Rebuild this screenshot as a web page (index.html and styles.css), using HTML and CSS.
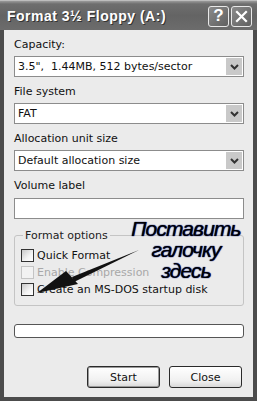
FILE: index.html
```html
<!DOCTYPE html>
<html>
<head>
<meta charset="utf-8">
<link rel="stylesheet" href="styles.css">
</head>
<body>
<div class="window">
  <div class="titlebar">
    <span class="title">Format 3½ Floppy (A:)</span>
    <div class="tbtns">
      <span class="tbtn help">?</span>
      <span class="tbtn close">
        <svg width="13" height="13" viewBox="0 0 13 13"><path d="M2 2 L11 11 M11 2 L2 11" stroke="#fff" stroke-width="2.2" stroke-linecap="square"/></svg>
      </span>
    </div>
  </div>
  <div class="body">
    <div class="label">Capacity:</div>
    <div class="select"><span class="val">3.5",&nbsp; 1.44MB, 512 bytes/sector</span><span class="drop"><svg width="9" height="6" viewBox="0 0 9 6"><path d="M1 1 L4.5 4.5 L8 1" fill="none" stroke="#333" stroke-width="2"/></svg></span></div>
    <div class="label">File system</div>
    <div class="select"><span class="val">FAT</span><span class="drop"><svg width="9" height="6" viewBox="0 0 9 6"><path d="M1 1 L4.5 4.5 L8 1" fill="none" stroke="#333" stroke-width="2"/></svg></span></div>
    <div class="label">Allocation unit size</div>
    <div class="select"><span class="val">Default allocation size</span><span class="drop"><svg width="9" height="6" viewBox="0 0 9 6"><path d="M1 1 L4.5 4.5 L8 1" fill="none" stroke="#333" stroke-width="2"/></svg></span></div>
    <div class="label">Volume label</div>
    <div class="input"></div>
    <fieldset class="group">
      <legend>Format options</legend>
      <div class="check"><span class="box"></span>Quick Format</div>
      <div class="check disabled"><span class="box"></span>Enable Compression</div>
      <div class="check"><span class="box"></span>Create an MS-DOS startup disk</div>
    </fieldset>
    <div class="progress"></div>
    <div class="buttons">
      <span class="btn default">Start</span>
      <span class="btn">Close</span>
    </div>
  </div>
  <svg class="arrow" width="257" height="401" viewBox="0 0 257 401">
    <path d="M139 250 L72 277 L74 282 Z" fill="#111"/>
    <path d="M37 293 L66 271 L78 284 Z" fill="#111"/>
  </svg>
  <div class="note">
    <div class="nl">Поставить</div>
    <div class="nl">галочку</div>
    <div class="nl">здесь</div>
  </div>
</div>
</body>
</html>
```
FILE: styles.css
```css
html, body {
  margin: 0;
  padding: 0;
  background: #fff;
}
.window {
  position: relative;
  width: 257px;
  height: 401px;
  box-sizing: border-box;
  background: #4c4c4c;
  padding: 0 4px 4px 4px;
  display: flex;
  flex-direction: column;
  font-family: "DejaVu Sans", sans-serif;
  font-size: 11px;
  color: #111;
  overflow: hidden;
}
.titlebar {
  height: 30px;
  margin: 0 -4px;
  padding: 0 5px 0 7px;
  display: flex;
  align-items: center;
  justify-content: space-between;
  background: linear-gradient(#9a9a9a 0, #6e6e6e 3px, #646464 50%, #6c6c6c 100%);
  border-top: 1px solid #bdbdbd;
  box-sizing: border-box;
}
.title {
  color: #fff;
  font-family: "Liberation Sans", sans-serif;
  font-weight: bold;
  font-size: 14px;
  text-shadow: 1px 1px 0 #333;
  letter-spacing: 0.5px;
}
.tbtns {
  display: flex;
  gap: 2px;
  margin-top: 1px;
}
.tbtn {
  width: 21px;
  height: 21px;
  border: 1px solid #e8e8e8;
  border-radius: 3px;
  background: linear-gradient(135deg, #8a8a8a, #606060);
  color: #fff;
  display: flex;
  align-items: center;
  justify-content: center;
  font-family: "Liberation Sans", sans-serif;
  font-weight: bold;
  font-size: 17px;
  box-sizing: border-box;
}
.body {
  flex: 1;
  background: #ebebeb;
  padding: 7px 9px 0 10px;
  display: flex;
  flex-direction: column;
}
.label {
  height: 15px;
  line-height: 15px;
  margin-bottom: 4px;
}
.select {
  height: 21px;
  box-sizing: border-box;
  border: 1px solid #8c8c8c;
  background: #fff;
  display: flex;
  align-items: center;
  justify-content: space-between;
  padding: 0 1px 0 3px;
  margin-bottom: 7px;
}
.val {
  white-space: nowrap;
}
.drop {
  width: 16px;
  height: 17px;
  background: #c9c9c9;
  display: flex;
  align-items: center;
  justify-content: center;
}
.input {
  height: 21px;
  box-sizing: border-box;
  border: 1px solid #8c8c8c;
  background: #fff;
  margin-top: 1px;
  margin-bottom: 10px;
}
.group {
  margin: 0;
  padding: 5px 0 0 6px;
  border: 1px solid #c4c4c4;
  border-radius: 3px;
  height: 77px;
  box-sizing: border-box;
}
.group legend {
  padding: 0 2px;
  margin-left: 2px;
  color: #222;
}
.check {
  display: flex;
  align-items: center;
  height: 17px;
  white-space: nowrap;
}
.box {
  width: 13px;
  height: 13px;
  box-sizing: border-box;
  border: 1px solid #333;
  background: linear-gradient(135deg, #c8c8c8, #f4f4f4 60%, #fff);
  margin-right: 3px;
}
.disabled {
  color: #a8a8a8;
}
.disabled .box {
  border-color: #c4c4c4;
  background: #f2f2f2;
}
.progress {
  margin-top: 18px;
  height: 14px;
  box-sizing: border-box;
  border: 1px solid #555;
  border-radius: 3px;
  background: #fff;
}
.buttons {
  margin-top: 28px;
  display: flex;
  justify-content: flex-end;
  gap: 9px;
  padding-right: 2px;
}
.btn {
  width: 73px;
  height: 22px;
  box-sizing: border-box;
  border: 1px solid #2a2a2a;
  border-radius: 3px;
  background: linear-gradient(#fff, #f0f0f0 70%, #d8d8d8);
  display: flex;
  align-items: center;
  justify-content: center;
}
.btn.default {
  box-shadow: inset 0 0 0 1px #9a9a9a;
}
.arrow {
  position: absolute;
  left: 0;
  top: 0;
  pointer-events: none;
}
.note {
  position: absolute;
  left: 130px;
  top: 218px;
  width: 112px;
  text-align: center;
  font-family: "Liberation Sans", sans-serif;
  font-style: italic;
  font-size: 21px;
  letter-spacing: -0.9px;
  color: #000;
  text-shadow: 0 0 1px #1a2a8a, 0 0 1px #1a2a8a;
}
.nl {
  height: 21px;
  line-height: 21px;
}
```
